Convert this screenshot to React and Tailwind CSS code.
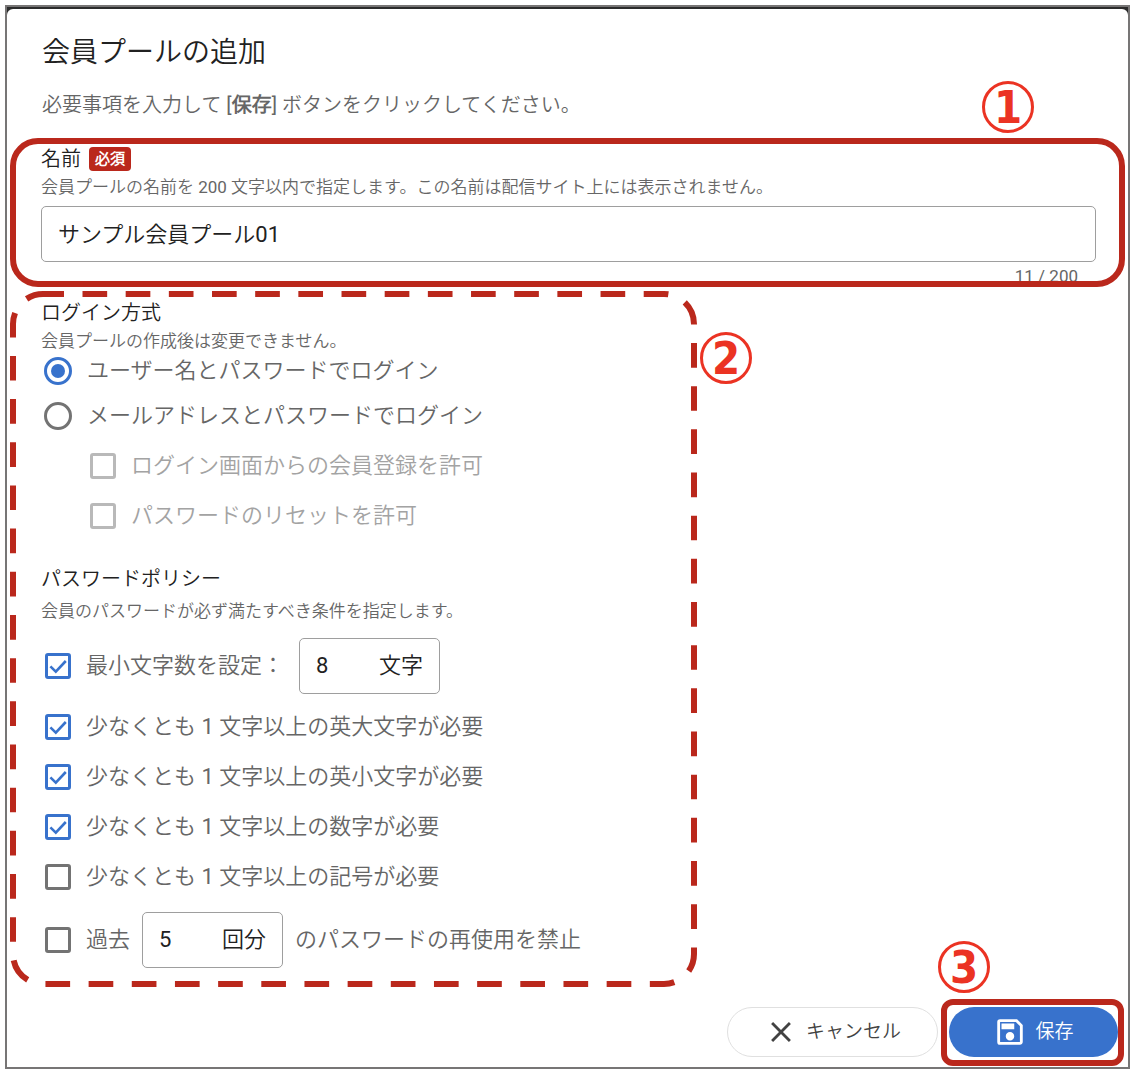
import React, { useState } from "react";
import { MdClose, MdOutlineSave } from "react-icons/md";

const MAX_NAME = 200;

const Callout = ({ number, className }) => (
  <span
    className={`absolute z-10 flex h-[52px] w-[52px] items-center justify-center rounded-full border-3 border-[#eb3323] font-['DejaVu_Sans_Condensed','DejaVu_Sans',sans-serif] text-[45px] leading-none font-bold text-[#eb3323] ${className}`}
  >
    {number}
  </span>
);

const Checkbox = ({ id, checked, onChange, disabled = false }) => (
  <span className="relative flex h-[26px] w-[26px] shrink-0">
    <input
      id={id}
      type="checkbox"
      checked={checked}
      disabled={disabled}
      onChange={onChange}
      className="h-[26px] w-[26px] appearance-none rounded-[3px] border-3 border-[#737373] checked:border-[#3872cc] disabled:border-[#b9b9b9]"
    />
    {checked && (
      <svg
        viewBox="0 0 26 26"
        className="pointer-events-none absolute inset-0"
        fill="none"
        stroke="#3872cc"
        strokeWidth="2.6"
      >
        <path d="M5.4 13.4l5.4 5.2L20.8 8" />
      </svg>
    )}
  </span>
);

const Radio = ({ id, checked, onChange }) => (
  <input
    id={id}
    type="radio"
    name="loginMethod"
    checked={checked}
    onChange={onChange}
    className="grid h-7 w-7 shrink-0 appearance-none place-content-center rounded-full border-3 border-[#737373] checked:border-[#3872cc] checked:before:h-3.5 checked:before:w-3.5 checked:before:rounded-full checked:before:bg-[#3872cc] checked:before:content-['']"
  />
);

const NumberField = ({ id, label, value, unit, onChange }) => (
  <div className="flex h-14 w-[141px] items-center rounded-[5px] border border-[#9e9e9e] px-4 text-[#212121]">
    <input
      id={id}
      aria-label={label}
      inputMode="numeric"
      value={value}
      onChange={onChange}
      className="w-full min-w-0 flex-1 outline-none"
    />
    <span className="shrink-0">{unit}</span>
  </div>
);

const SectionHeading = ({ title, description, className = "" }) => (
  <>
    <h2 className="text-[20px] leading-7 text-[#212121]">{title}</h2>
    <p className={`text-[17px] leading-7 ${className}`}>{description}</p>
  </>
);

const App = () => {
  const [name, setName] = useState("サンプル会員プール01");
  const [loginMethod, setLoginMethod] = useState("username");
  const [minLength, setMinLength] = useState("8");
  const [history, setHistory] = useState("5");
  const [policy, setPolicy] = useState({
    minLength: true,
    upper: true,
    lower: true,
    digit: true,
    symbol: false,
    history: false,
  });

  const toggle = (key) => setPolicy({ ...policy, [key]: !policy[key] });

  const loginMethods = [
    { key: "username", label: "ユーザー名とパスワードでログイン" },
    { key: "email", label: "メールアドレスとパスワードでログイン" },
  ];

  const emailOptions = [
    { key: "signup", label: "ログイン画面からの会員登録を許可" },
    { key: "reset", label: "パスワードのリセットを許可" },
  ];

  const rules = [
    { key: "upper", label: "少なくとも 1 文字以上の英大文字が必要" },
    { key: "lower", label: "少なくとも 1 文字以上の英小文字が必要" },
    { key: "digit", label: "少なくとも 1 文字以上の数字が必要" },
    { key: "symbol", label: "少なくとも 1 文字以上の記号が必要" },
  ];

  return (
    <div className="min-h-screen bg-white pt-[5px] pr-2 pb-[5px] pl-[5px] font-[Roboto,'Noto_Sans_CJK_JP_DemiLight','Noto_Sans_CJK_JP',sans-serif] text-[#666666]">
      <div className="border-2 border-[#777575] bg-[#2b2b2b] pt-0.5">
        <form
          className="rounded-t-md bg-white"
          onSubmit={(e) => e.preventDefault()}
        >
          {/* Header */}
          <header className="relative px-[35px] pt-[26px]">
            <h1 className="text-[28px] leading-9 text-[#212121]">
              会員プールの追加
            </h1>
            <p className="mt-5 text-[20px] leading-7">
              必要事項を入力して [<b className="font-bold">保存</b>]
              {" "}ボタンをクリックしてください。
            </p>
            <Callout number={1} className="top-[72px] right-[94px]" />
          </header>

          {/* Name */}
          <section className="relative mx-[3px] mt-[19px] pt-[7px] pr-[29px] pl-[31px]">
            <div className="flex h-7 items-center gap-2">
              <label
                htmlFor="name"
                className="text-[20px] leading-7 text-[#212121]"
              >
                名前
              </label>
              <span className="rounded bg-[#ba281c] px-1.5 text-[15px] leading-6 font-bold text-white">
                必須
              </span>
            </div>
            <p className="text-[17px] leading-7">
              会員プールの名前を 200
              文字以内で指定します。この名前は配信サイト上には表示されません。
            </p>
            <input
              id="name"
              value={name}
              maxLength={MAX_NAME}
              onChange={(e) => setName(e.target.value)}
              className="mt-[5px] block h-14 w-full rounded-[5px] border border-[#9e9e9e] px-4 pb-1 text-[22px] text-[#212121] outline-none"
            />
            <p className="h-[25px] pr-[18px] text-right text-[17px] leading-7">
              {name.length + " / " + MAX_NAME}
            </p>
            <div className="pointer-events-none absolute inset-0 rounded-[28px] border-6 border-[#ba281c]" />
          </section>

          {/* Login method and password policy */}
          <section className="relative mt-[7px] ml-1.5 max-w-[681px] pt-[5px] pb-4 pl-7">
            <svg
              className="pointer-events-none absolute inset-0 h-full w-full overflow-visible"
              fill="none"
              stroke="#ba281c"
              strokeWidth="6"
            >
              <rect
                width="100%"
                height="100%"
                rx="30"
                strokeDasharray="24.67 18.5"
                strokeDashoffset="3.67"
              />
            </svg>
            <Callout number={2} className="top-[38px] -right-[58px]" />

            <SectionHeading
              title="ログイン方式"
              description="会員プールの作成後は変更できません。"
            />
            <div className="mt-0.5 ml-[3px] flex flex-col gap-[17px] text-[22px] leading-7">
              {loginMethods.map((m) => (
                <div key={m.key} className="flex items-center gap-[15px]">
                  <Radio
                    id={m.key}
                    checked={loginMethod === m.key}
                    onChange={() => setLoginMethod(m.key)}
                  />
                  <label htmlFor={m.key}>{m.label}</label>
                </div>
              ))}
            </div>
            <div className="mt-[11px] ml-[49px] text-[22px] leading-7">
              {emailOptions.map((o) => (
                <div
                  key={o.key}
                  className="flex h-[50px] items-center gap-[15px] text-[#a3a3a3]"
                >
                  <Checkbox id={o.key} checked={false} disabled />
                  <label htmlFor={o.key}>{o.label}</label>
                </div>
              ))}
            </div>

            <div className="mt-6">
              <SectionHeading
                title="パスワードポリシー"
                description="会員のパスワードが必ず満たすべき条件を指定します。"
                className="mt-1"
              />
            </div>
            <div className="mt-[13px] ml-1 text-[22px] leading-7">
              <div className="flex items-center gap-[15px]">
                <div className="flex items-center gap-[15px]">
                  <Checkbox
                    id="minLength"
                    checked={policy.minLength}
                    onChange={() => toggle("minLength")}
                  />
                  <label htmlFor="minLength">最小文字数を設定：</label>
                </div>
                <NumberField
                  id="minLengthValue"
                  label="最小文字数"
                  value={minLength}
                  unit="文字"
                  onChange={(e) => setMinLength(e.target.value)}
                />
              </div>
              <div className="mt-2 mb-2.5">
                {rules.map((r) => (
                  <div
                    key={r.key}
                    className="flex h-[50px] items-center gap-[15px]"
                  >
                    <Checkbox
                      id={r.key}
                      checked={policy[r.key]}
                      onChange={() => toggle(r.key)}
                    />
                    <label htmlFor={r.key}>{r.label}</label>
                  </div>
                ))}
              </div>
              <div className="flex items-center gap-3">
                <div className="flex items-center gap-[15px]">
                  <Checkbox
                    id="history"
                    checked={policy.history}
                    onChange={() => toggle("history")}
                  />
                  <label htmlFor="history">過去</label>
                </div>
                <NumberField
                  id="historyValue"
                  label="再使用を禁止する回数"
                  value={history}
                  unit="回分"
                  onChange={(e) => setHistory(e.target.value)}
                />
                <label htmlFor="history">のパスワードの再使用を禁止</label>
              </div>
            </div>
          </section>

          {/* Actions */}
          <footer className="flex justify-end gap-[11px] px-2.5 pt-[23px] pb-2.5 text-[19px]">
            <button
              type="button"
              className="flex h-[50px] w-[211px] items-center justify-center gap-2 rounded-full border border-[#e0e0e0] text-[#424242]"
            >
              <MdClose size={34} />
              キャンセル
            </button>
            <div className="relative">
              <button
                type="submit"
                className="flex h-[50px] w-[169px] items-center justify-center gap-2 rounded-full bg-[#3872cc] text-white"
              >
                <MdOutlineSave size={34} />
                保存
              </button>
              <div className="pointer-events-none absolute -top-2 -right-1.5 -bottom-[9px] -left-2 rounded-xl border-6 border-[#ba281c]" />
              <Callout number={3} className="-top-[66px] -left-[11px]" />
            </div>
          </footer>
        </form>
      </div>
    </div>
  );
};

export default App;
